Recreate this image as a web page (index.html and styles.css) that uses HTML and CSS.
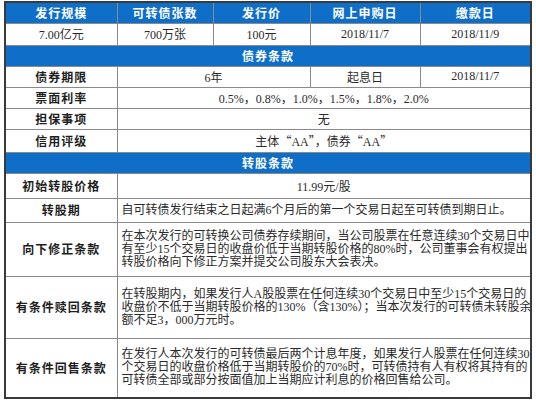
FILE: index.html
```html
<!DOCTYPE html>
<html lang="zh">
<head>
<meta charset="utf-8">
<link rel="stylesheet" href="styles.css">
</head>
<body>
<table class="bond">
  <colgroup>
    <col class="c1"><col class="c2"><col class="c3"><col class="c4"><col class="c5">
  </colgroup>
  <tr class="r-head">
    <th class="head">发行规模</th>
    <th class="head">可转债张数</th>
    <th class="head">发行价</th>
    <th class="head">网上申购日</th>
    <th class="head">缴款日</th>
  </tr>
  <tr class="r-22">
    <td class="mid">7.00亿元</td>
    <td class="mid">700万张</td>
    <td class="mid">100元</td>
    <td class="mid">2018/11/7</td>
    <td class="mid">2018/11/9</td>
  </tr>
  <tr class="r-21">
    <th class="section" colspan="5">债券条款</th>
  </tr>
  <tr class="r-21">
    <th class="label">债券期限</th>
    <td class="mid" colspan="2">6年</td>
    <td class="mid">起息日</td>
    <td class="mid">2018/11/7</td>
  </tr>
  <tr class="r-21">
    <th class="label">票面利率</th>
    <td class="mid" colspan="4">0.5%，0.8%，1.0%，1.5%，1.8%，2.0%</td>
  </tr>
  <tr class="r-21">
    <th class="label">担保事项</th>
    <td class="mid" colspan="4">无</td>
  </tr>
  <tr class="r-23">
    <th class="label">信用评级</th>
    <td class="mid" colspan="4">主体<span class="cjk">“</span>AA<span class="cjk">”</span>，债券<span class="cjk">“</span>AA<span class="cjk">”</span></td>
  </tr>
  <tr class="r-21">
    <th class="section" colspan="5">转股条款</th>
  </tr>
  <tr class="r-25">
    <th class="label">初始转股价格</th>
    <td class="mid" colspan="4">11.99元/股</td>
  </tr>
  <tr class="r-24">
    <th class="label">转股期</th>
    <td class="text" colspan="4">自可转债发行结束之日起满6个月后的第一个交易日起至可转债到期日止。</td>
  </tr>
  <tr class="r-54">
    <th class="label">向下修正条款</th>
    <td class="text" colspan="4">在本次发行的可转换公司债券存续期间，当公司股票在任意连续30个交易日中<br>有至少15个交易日的收盘价低于当期转股价格的80%时，公司董事会有权提出<br>转股价格向下修正方案并提交公司股东大会表决。</td>
  </tr>
  <tr class="r-62">
    <th class="label">有条件赎回条款</th>
    <td class="text" colspan="4">在转股期内，如果发行人A股股票在任何连续30个交易日中至少15个交易日的<br>收盘价不低于当期转股价格的130%（含130%）；当本次发行的可转债未转股余<br>额不足3，000万元时。</td>
  </tr>
  <tr class="r-60">
    <th class="label">有条件回售条款</th>
    <td class="text" colspan="4">在发行人本次发行的可转债最后两个计息年度，如果发行人股票在任何连续30<br>个交易日的收盘价格低于当期转股价的70%时，可转债持有人有权将其持有的<br>可转债全部或部分按面值加上当期应计利息的价格回售给公司。</td>
  </tr>
</table>
</body>
</html>
```

FILE: styles.css
```css
html, body {
  margin: 0;
  padding: 0;
  background: #ffffff;
}
body {
  padding: 1px 0 0 4px;
  font-family: "Liberation Serif", "Noto Sans CJK SC", serif;
  font-size: 12px;
  color: #2a2a2a;
}
.cjk {
  font-family: "Noto Sans CJK SC", sans-serif;
}
.bond {
  border-collapse: collapse;
  table-layout: fixed;
  width: 527px;
  border: 2px solid #3a3a3a;
}
.c1 { width: 112px; }
.c2 { width: 96px; }
.c3 { width: 97px; }
.c4 { width: 110px; }
.c5 { width: 111px; }
.bond th, .bond td {
  border: 1px solid #8a8a8a;
  padding: 0 4px;
  vertical-align: middle;
  overflow: hidden;
}
.head, .section {
  background: #0f6fc8;
  color: #ffffff;
  font-weight: bold;
  letter-spacing: 1px;
  text-align: center;
}
.section {
  border-left-color: #0f6fc8;
  border-right-color: #0f6fc8;
}
.head {
  border-color: #6f7f90;
}
.label {
  font-weight: bold;
  letter-spacing: 1px;
  text-align: center;
  color: #1e1e1e;
}
.mid {
  text-align: center;
}
.text {
  text-align: left;
  line-height: 13px;
  white-space: nowrap;
  padding: 0 0 0 4px;
}
.r-head { height: 21px; }
.r-21 { height: 21px; }
.r-22 { height: 22px; }
.r-23 { height: 23px; }
.r-24 { height: 24px; }
.r-25 { height: 25px; }
.r-54 { height: 54px; }
.r-60 { height: 60px; }
.r-62 { height: 62px; }
```
